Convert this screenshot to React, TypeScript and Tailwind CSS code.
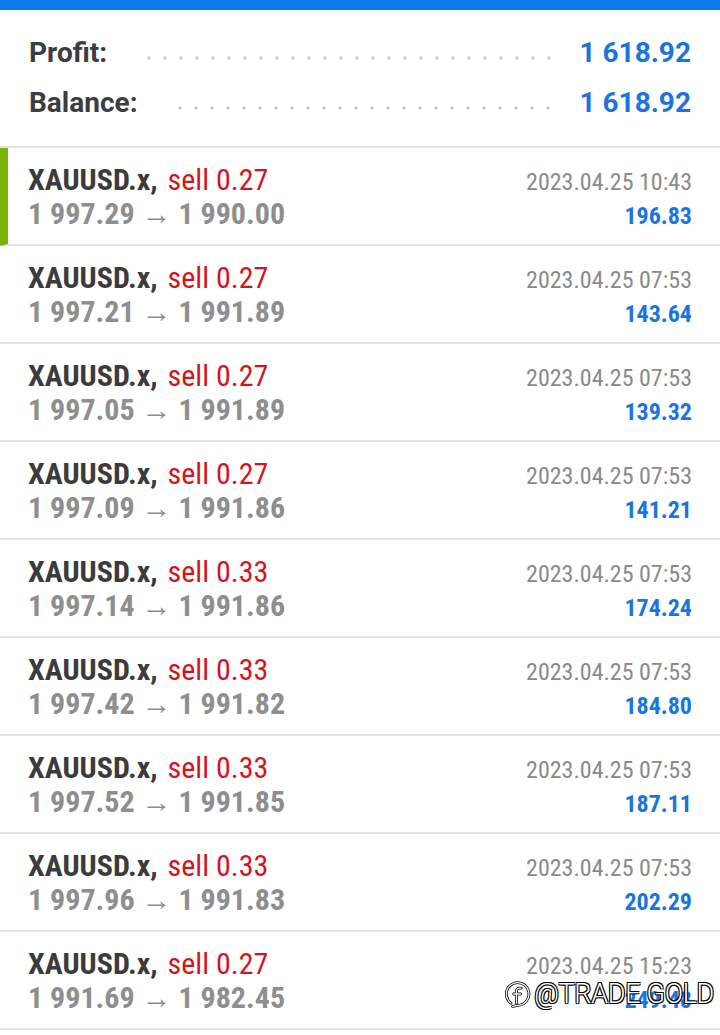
const TRADES = [
  { lot: '0.27', open: '1 997.29', close: '1 990.00', time: '2023.04.25 10:43', profit: '196.83', active: true },
  { lot: '0.27', open: '1 997.21', close: '1 991.89', time: '2023.04.25 07:53', profit: '143.64' },
  { lot: '0.27', open: '1 997.05', close: '1 991.89', time: '2023.04.25 07:53', profit: '139.32' },
  { lot: '0.27', open: '1 997.09', close: '1 991.86', time: '2023.04.25 07:53', profit: '141.21' },
  { lot: '0.33', open: '1 997.14', close: '1 991.86', time: '2023.04.25 07:53', profit: '174.24' },
  { lot: '0.33', open: '1 997.42', close: '1 991.82', time: '2023.04.25 07:53', profit: '184.80' },
  { lot: '0.33', open: '1 997.52', close: '1 991.85', time: '2023.04.25 07:53', profit: '187.11' },
  { lot: '0.33', open: '1 997.96', close: '1 991.83', time: '2023.04.25 07:53', profit: '202.29' },
  { lot: '0.27', open: '1 991.69', close: '1 982.45', time: '2023.04.25 15:23', profit: '249.48' },
];

function SummaryRow({ label, value }: { label: string; value: string }) {
  return (
    <div className="flex h-[50px] items-center">
      <span className="text-[28px] font-bold text-[#3d3d3f]">{label}</span>
      <div className="ml-[34px] mr-[24px] mt-[10px] h-[4px] flex-1 bg-[radial-gradient(circle,#d0d0d0_1.5px,transparent_1.9px)] bg-[length:16px_4px]" />
      <span className="text-[28px] font-bold text-[#1a74e2]">{value}</span>
    </div>
  );
}

function FbMark() {
  const circle = 'M6.5 21.5 A10.5 10.5 0 1 1 12.5 23.5 L8 24.5';
  const f = 'M16 7.5 h-1.8 a2.6 2.6 0 0 0 -2.6 2.6 V21.5 M9 13 h6.5';
  return (
    <svg className="h-[28px] w-[28px]" viewBox="0 0 26 26" fill="none" strokeLinecap="round" strokeLinejoin="round">
      <path d={circle} stroke="#000" strokeWidth="2.6" />
      <path d={f} stroke="#000" strokeWidth="2.6" />
      <path d={circle} stroke="#fff" strokeWidth="1.2" />
      <path d={f} stroke="#fff" strokeWidth="1.2" />
    </svg>
  );
}

export default function App() {
  return (
    <div className="relative h-[1035px] w-[720px] overflow-hidden bg-white font-['Roboto','Noto_Sans',sans-serif]">
      <div className="h-[10px] bg-[#0a7af0]" />

      <div className="border-b-2 border-[#e2e2e2] px-[29px] pb-[18px] pt-[18px]">
        <SummaryRow label="Profit:" value="1 618.92" />
        <SummaryRow label="Balance:" value="1 618.92" />
      </div>

      <div className="font-['Roboto_Condensed','Roboto',sans-serif] [font-stretch:condensed]">
        {TRADES.map((t, i) => (
          <div
            key={i}
            className={
              t.active
                ? 'h-[98px] border-b-2 border-l-[8px] border-[#e2e2e2] border-l-[#79b200] pl-[20px] pr-[28px] pt-[15px]'
                : 'h-[98px] border-b-2 border-[#e2e2e2] pl-[28px] pr-[28px] pt-[15px]'
            }
          >
            <div className="flex h-[34px] items-baseline justify-between">
              <span className="text-[30px] leading-[34px]">
                <span className="font-bold text-[#3b3b3d]">XAUUSD.x,</span>
                <span className="ml-[3px] text-[#d4151f]"> sell {t.lot}</span>
              </span>
              <span className="text-[24px] leading-[34px] text-[#8a8a8a]">{t.time}</span>
            </div>
            <div className="flex h-[34px] items-baseline justify-between">
              <span className="text-[30px] font-bold leading-[34px] text-[#8e8e90]">
                {t.open} <span className="font-normal">→</span> {t.close}
              </span>
              <span className="text-[24px] font-bold leading-[34px] text-[#1a74e2]">{t.profit}</span>
            </div>
          </div>
        ))}
      </div>

      <div className="absolute right-[6px] top-[974px] flex items-center gap-[2px]">
        <FbMark />
        <span className="text-[27px] font-light tracking-[-0.3px] text-white [text-shadow:-1px_-1px_0_#000,1px_-1px_0_#000,-1px_1px_0_#000,1px_1px_0_#000]">
          @TRADE GOLD
        </span>
      </div>
    </div>
  );
}
